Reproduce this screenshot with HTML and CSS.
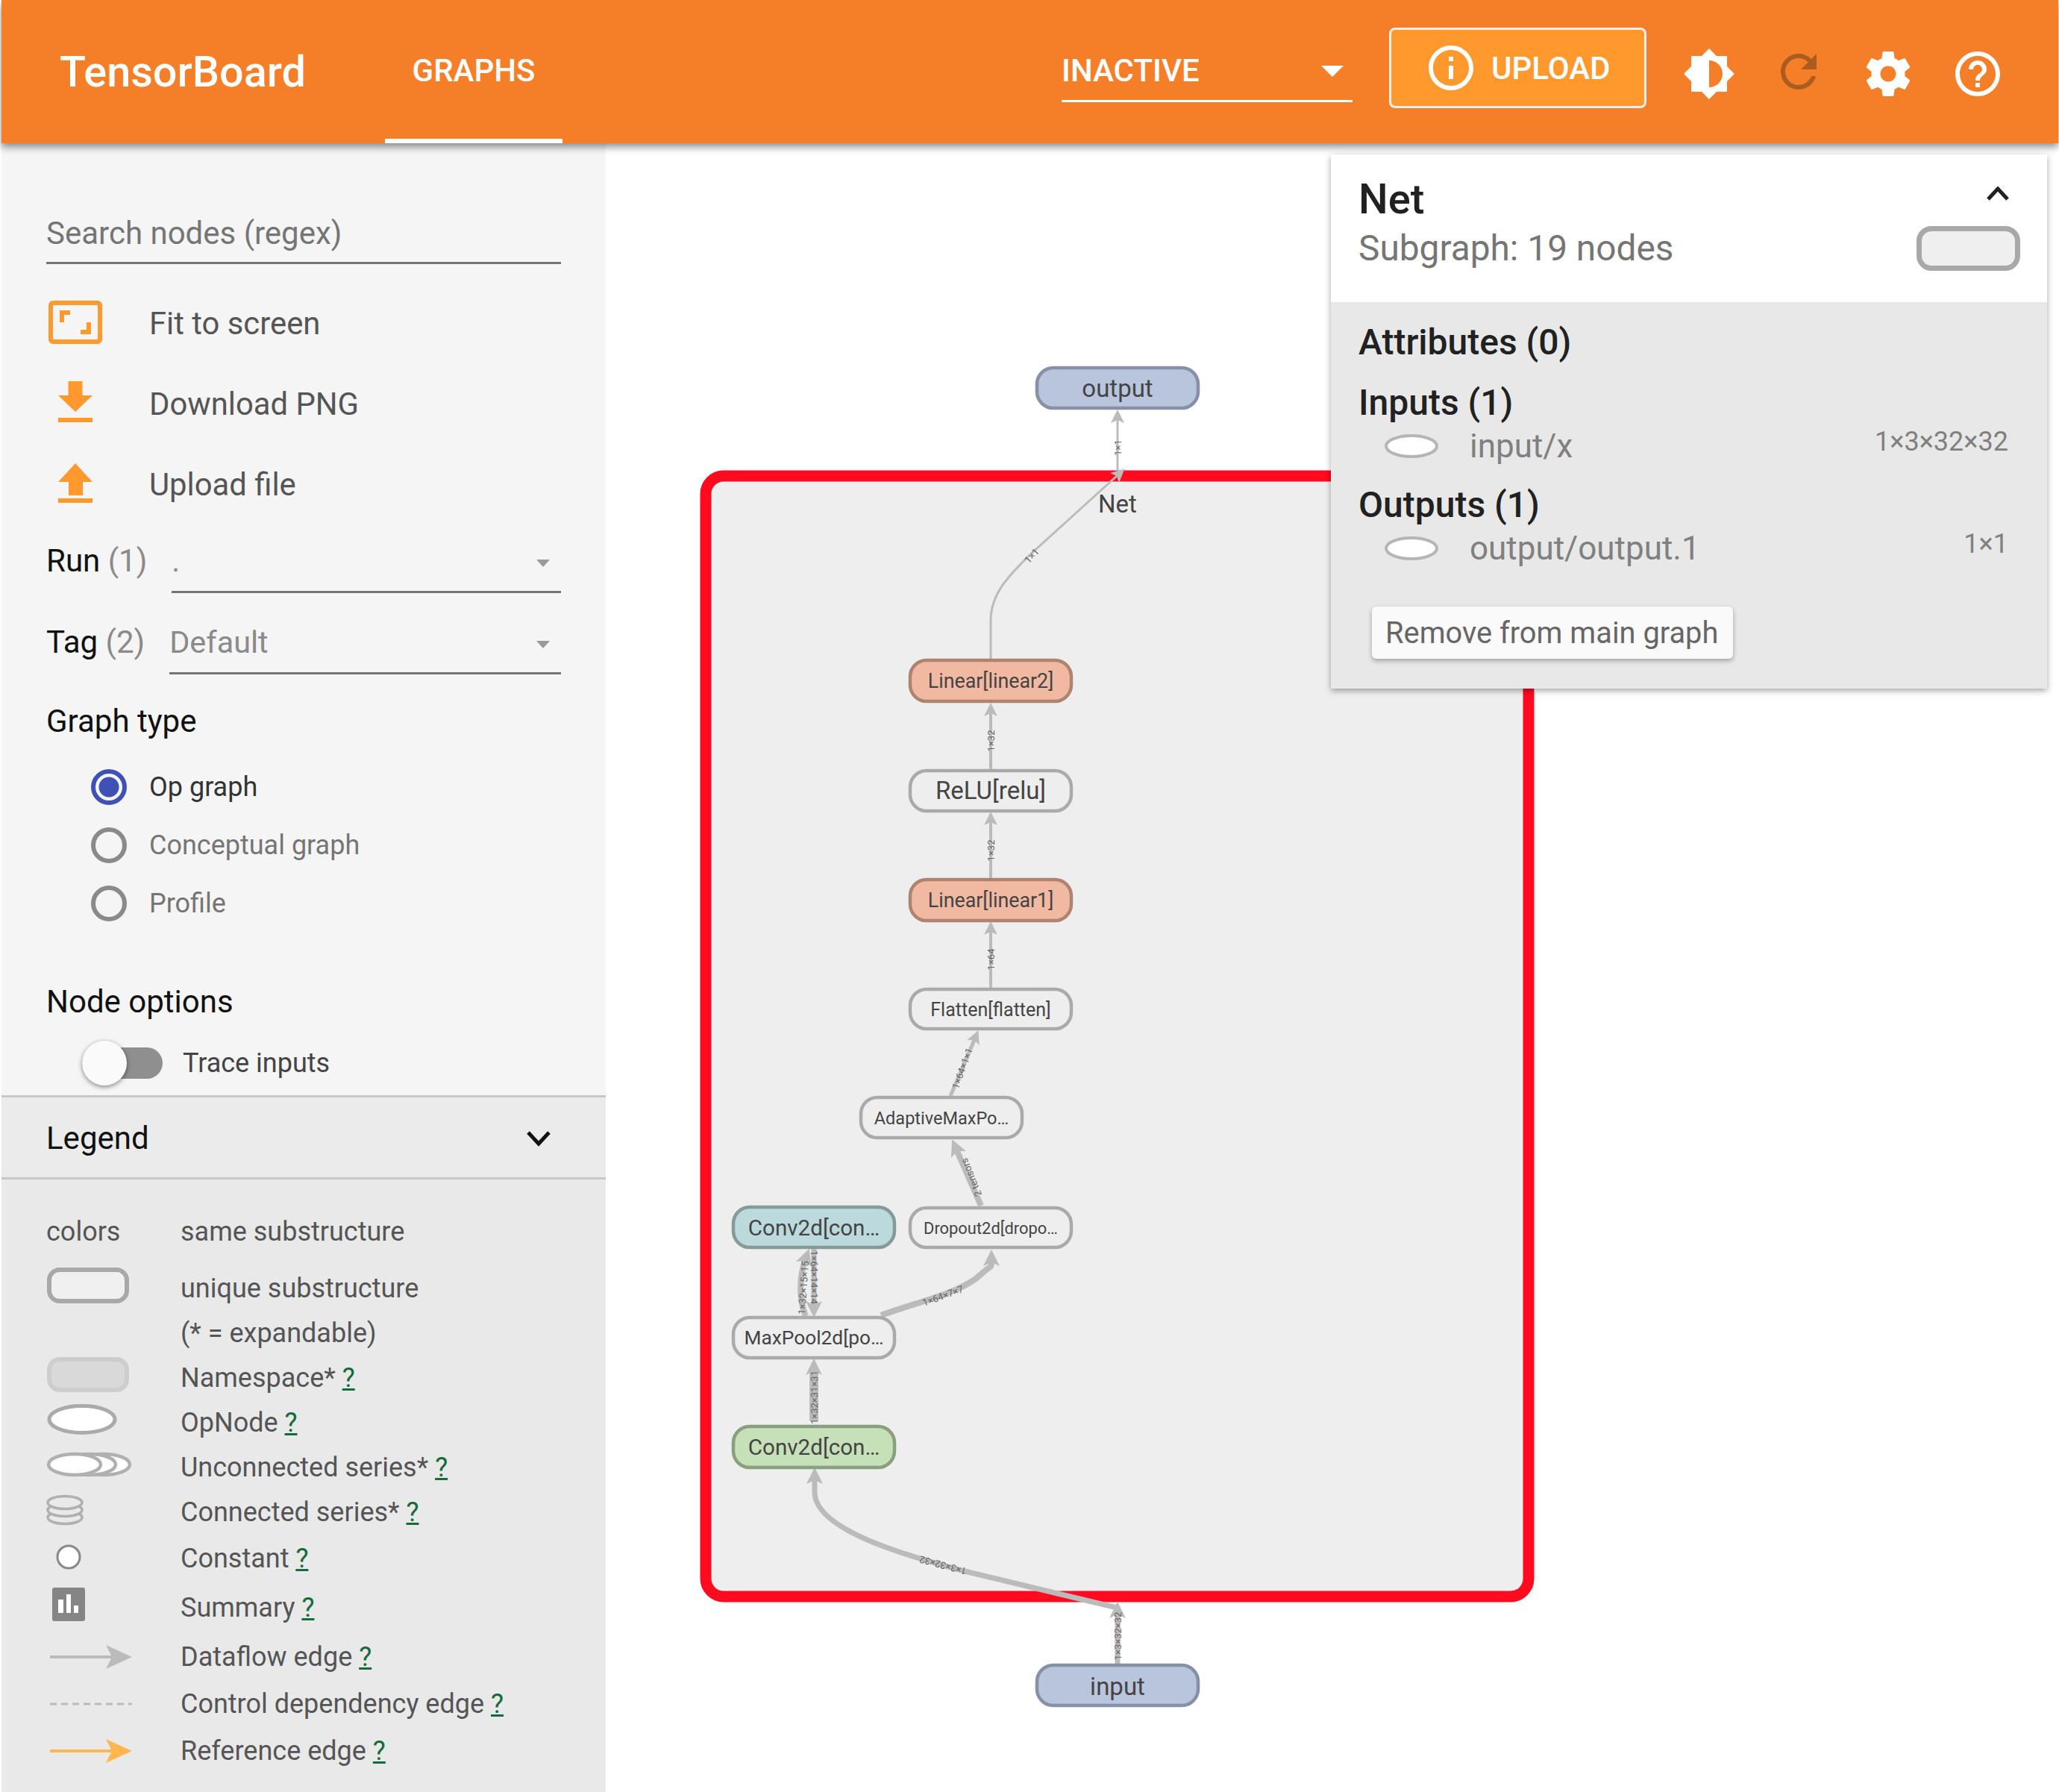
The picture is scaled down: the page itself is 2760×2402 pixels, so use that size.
FILE: index.html
```html
<!DOCTYPE html>
<html lang="en">
  <head>
    <meta charset="UTF-8" />
    <title>TensorBoard</title>
    <link rel="stylesheet" href="styles.css">
  </head>
  <body>
    <div class="header">
      <div class="brand">TensorBoard</div>
      <div class="tab">GRAPHS</div>
      <div class="run-select">
        <span>INACTIVE</span>
        <span class="run-caret"></span>
      </div>
      <button class="upload-btn">
        <svg class="upload-icon" viewBox="0 0 24 24"><path d="M11 17h2v-6h-2v6zm1-15C6.48 2 2 6.48 2 12s4.48 10 10 10 10-4.48 10-10S17.52 2 12 2zm0 18c-4.41 0-8-3.59-8-8s3.59-8 8-8 8 3.59 8 8-3.59 8-8 8zM11 9h2V7h-2v2z"/></svg>
        <span>UPLOAD</span>
      </button>
      <svg class="icon" viewBox="0 0 24 24"><path d="M20 15.31L23.31 12 20 8.69V4h-4.69L12 .69 8.69 4H4v4.69L.69 12 4 15.31V20h4.69L12 23.31 15.31 20H20v-4.69zM12 18V6c3.31 0 6 2.69 6 6s-2.69 6-6 6z"/></svg>
      <svg class="icon icon-disabled" viewBox="0 0 24 24"><path d="M17.65 6.35C16.2 4.9 14.21 4 12 4c-4.42 0-7.99 3.58-7.99 8s3.57 8 7.99 8c3.73 0 6.84-2.55 7.73-6h-2.08c-.82 2.33-3.04 4-5.65 4-3.31 0-6-2.69-6-6s2.69-6 6-6c1.66 0 3.14.69 4.22 1.78L13 11h7V4l-2.35 2.35z"/></svg>
      <svg class="icon" viewBox="0 0 24 24"><path d="M19.43 12.98c.04-.32.07-.64.07-.98s-.03-.66-.07-.98l2.11-1.65c.19-.15.24-.42.12-.64l-2-3.46c-.12-.22-.39-.3-.61-.22l-2.49 1c-.52-.4-1.08-.73-1.69-.98l-.38-2.65C14.46 2.18 14.25 2 14 2h-4c-.25 0-.46.18-.49.42l-.38 2.65c-.61.25-1.17.59-1.69.98l-2.49-1c-.23-.09-.49 0-.61.22l-2 3.46c-.13.22-.07.49.12.64l2.11 1.65c-.04.32-.07.65-.07.98s.03.66.07.98l-2.11 1.65c-.19.15-.24.42-.12.64l2 3.46c.12.22.39.3.61.22l2.49-1c.52.4 1.08.73 1.69.98l.38 2.65c.03.24.24.42.49.42h4c.25 0 .46-.18.49-.42l.38-2.65c.61-.25 1.17-.59 1.69-.98l2.49 1c.23.09.49 0 .61-.22l2-3.46c.12-.22.07-.49-.12-.64l-2.11-1.65zM12 15.5c-1.93 0-3.5-1.57-3.5-3.5s1.57-3.5 3.5-3.5 3.5 1.57 3.5 3.5-1.57 3.5-3.5 3.5z"/></svg>
      <svg class="icon" viewBox="0 0 24 24"><path d="M11 18h2v-2h-2v2zm1-16C6.48 2 2 6.48 2 12s4.48 10 10 10 10-4.48 10-10S17.52 2 12 2zm0 18c-4.41 0-8-3.59-8-8s3.59-8 8-8 8 3.59 8 8-3.59 8-8 8zm0-14c-2.21 0-4 1.79-4 4h2c0-1.1.9-2 2-2s2 .9 2 2c0 2-3 1.75-3 5h2c0-2.25 3-2.5 3-5 0-2.21-1.79-4-4-4z"/></svg>
    </div>

    <div class="main">
      <div class="sidebar">
        <div class="controls">
          <div class="search">Search nodes (regex)</div>

          <div class="actions">
            <div class="action">
              <svg class="action-icon" viewBox="0 0 80 80"><rect x="6" y="13" width="66" height="52" rx="3" class="fit-frame"/><path d="M18 39V23H32V29H24V39Z M60 39V55H46V49H54V39Z" class="fit-corners"/></svg>
              <span>Fit to screen</span>
            </div>
            <div class="action">
              <svg class="action-icon" viewBox="0 0 80 80"><path d="M29.5 10H48.5V29H62L39 51L16 29H29.5ZM16 59H62V65H16Z"/></svg>
              <span>Download PNG</span>
            </div>
            <div class="action">
              <svg class="action-icon" viewBox="0 0 80 80"><path d="M39 12L62 37H49V55H30V37H16ZM16 59H62V65H16Z"/></svg>
              <span>Upload file</span>
            </div>
          </div>

          <div class="filter filter-run">
            <div class="filter-label">Run <span class="count">(1)</span></div>
            <div class="filter-select"><span>.</span><span class="caret"></span></div>
          </div>
          <div class="filter filter-tag">
            <div class="filter-label">Tag <span class="count">(2)</span></div>
            <div class="filter-select"><span>Default</span><span class="caret"></span></div>
          </div>

          <div class="section-title graph-type">Graph type</div>
          <div class="radios">
            <div class="radio radio-checked"><span class="radio-mark"></span>Op graph</div>
            <div class="radio"><span class="radio-mark"></span>Conceptual graph</div>
            <div class="radio"><span class="radio-mark"></span>Profile</div>
          </div>

          <div class="section-title node-options">Node options</div>
          <div class="trace">
            <div class="toggle"><span class="toggle-thumb"></span></div>
            <span>Trace inputs</span>
          </div>
        </div>

        <div class="legend-header">
          <span>Legend</span>
          <svg class="legend-chevron" viewBox="0 0 40 24"><path d="M6 4L20 19L34 4"/></svg>
        </div>

        <div class="legend">
          <div class="legend-row">
            <div class="legend-key">colors</div>
            <div>same substructure</div>
          </div>
          <div class="legend-row row-unique">
            <svg class="legend-icon" viewBox="0 0 120 60"><rect x="4" y="5" width="104" height="42" rx="14" class="shape-unique"/></svg>
            <div>unique substructure</div>
          </div>
          <div class="legend-row">
            <div class="legend-key"></div>
            <div>(* = expandable)</div>
          </div>
          <div class="legend-row">
            <svg class="legend-icon" viewBox="0 0 120 60"><rect x="4" y="5" width="104" height="41" rx="14" class="shape-namespace"/></svg>
            <div>Namespace* <a href="#">?</a></div>
          </div>
          <div class="legend-row">
            <svg class="legend-icon" viewBox="0 0 120 60"><ellipse cx="48" cy="25.5" rx="44" ry="18" class="shape-op"/></svg>
            <div>OpNode <a href="#">?</a></div>
          </div>
          <div class="legend-row">
            <svg class="legend-icon" viewBox="0 0 120 60">
              <ellipse cx="77" cy="26" rx="35" ry="14" class="shape-series"/>
              <ellipse cx="58" cy="26" rx="35" ry="14" class="shape-series"/>
              <ellipse cx="38" cy="26" rx="35" ry="14" class="shape-series"/>
            </svg>
            <div>Unconnected series* <a href="#">?</a></div>
          </div>
          <div class="legend-row">
            <svg class="legend-icon" viewBox="0 0 120 60">
              <ellipse cx="25" cy="37" rx="23" ry="8.5" class="shape-stack"/>
              <ellipse cx="25" cy="27" rx="23" ry="8.5" class="shape-stack"/>
              <ellipse cx="25" cy="17" rx="23" ry="8.5" class="shape-stack"/>
            </svg>
            <div>Connected series* <a href="#">?</a></div>
          </div>
          <div class="legend-row row-constant">
            <svg class="legend-icon" viewBox="0 0 120 60"><circle cx="30" cy="28" r="15" class="shape-const"/></svg>
            <div>Constant <a href="#">?</a></div>
          </div>
          <div class="legend-row row-summary">
            <svg class="legend-icon" viewBox="0 0 120 60">
              <rect x="8" y="3" width="44" height="45" rx="3" class="shape-summary"/>
              <path d="M16 19H23V37H16ZM27 12H33V37H27ZM37 27H43V37H37Z" class="shape-bars"/>
            </svg>
            <div>Summary <a href="#">?</a></div>
          </div>
          <div class="legend-row row-summary">
            <svg class="legend-icon" viewBox="0 0 120 60">
              <path d="M5 30H88" class="edge-flow"/>
              <path d="M80 14L115 30L80 46L88 30Z" class="head-flow"/>
            </svg>
            <div>Dataflow edge <a href="#">?</a></div>
          </div>
          <div class="legend-row row-control">
            <svg class="legend-icon" viewBox="0 0 120 60"><path d="M5 30H115" class="edge-control"/></svg>
            <div>Control dependency edge <a href="#">?</a></div>
          </div>
          <div class="legend-row row-reference">
            <svg class="legend-icon" viewBox="0 0 120 60">
              <path d="M5 30H88" class="edge-ref"/>
              <path d="M80 14L115 30L80 46L88 30Z" class="head-ref"/>
            </svg>
            <div>Reference edge <a href="#">?</a></div>
          </div>
        </div>
      </div>

      <div class="graph">
        <svg class="graph-canvas" viewBox="812 192 1946 2210">
          <defs>
            <marker id="arrow" viewBox="0 0 18 18" refX="4" refY="9" markerWidth="18" markerHeight="18" markerUnits="userSpaceOnUse" orient="auto"><path d="M0 0L18 9L0 18L4 9Z" fill="#bbb"/></marker>
            <marker id="arrow-lg" viewBox="0 0 18 18" refX="4" refY="9" markerWidth="22" markerHeight="22" markerUnits="userSpaceOnUse" orient="auto"><path d="M0 0L18 9L0 18L4 9Z" fill="#bbb"/></marker>
          </defs>

          <rect x="946" y="638" width="1103" height="1502" rx="24" class="net-box"/>
          <text x="1498" y="687" class="net-label">Net</text>

          <path d="M1498 631V563" class="edge edge-1" marker-end="url(#arrow)"/>
          <path d="M1328 883V832C1328 796 1352 772 1379 745L1497 638" class="edge edge-1" marker-end="url(#arrow)"/>
          <path d="M1328 1031V956" class="edge edge-2" marker-end="url(#arrow)"/>
          <path d="M1328 1178V1102" class="edge edge-2" marker-end="url(#arrow)"/>
          <path d="M1328 1324V1249" class="edge edge-2" marker-end="url(#arrow)"/>
          <path d="M1274 1469L1306 1394" class="edge edge-3" marker-end="url(#arrow)"/>
          <path d="M1315 1616L1283 1543" class="edge edge-5" marker-end="url(#arrow-lg)"/>
          <path d="M1181 1763C1240 1742 1290 1732 1315 1708C1328 1696 1329 1700 1329 1692" class="edge edge-5" marker-end="url(#arrow-lg)"/>
          <path d="M1080 1764C1070 1740 1072 1710 1079 1690" class="edge edge-5" marker-end="url(#arrow-lg)"/>
          <path d="M1091 1674V1749" class="edge edge-6" marker-end="url(#arrow-lg)"/>
          <path d="M1091 1905V1838" class="edge edge-8" marker-end="url(#arrow-lg)"/>
          <path d="M1497 2155L1293 2106C1210 2084 1092 2050 1092 2000V1984" class="edge edge-6" marker-end="url(#arrow-lg)"/>
          <path d="M1498 2230V2164" class="edge edge-6" marker-end="url(#arrow-lg)"/>

          <text class="edge-label" transform="translate(1498 600) rotate(-90)">1×1</text>
          <text class="edge-label" transform="translate(1383 745) rotate(-47)">1×1</text>
          <text class="edge-label" transform="translate(1328 993) rotate(-90)">1×32</text>
          <text class="edge-label" transform="translate(1328 1140) rotate(-90)">1×32</text>
          <text class="edge-label" transform="translate(1328 1286) rotate(-90)">1×64</text>
          <text class="edge-label" transform="translate(1290 1432) rotate(-70)">1×64×1×1</text>
          <text class="edge-label" transform="translate(1302 1578) rotate(-112)">2 tensors</text>
          <text class="edge-label" transform="translate(1264 1737) rotate(-20)">1×64×7×7</text>
          <text class="edge-label" transform="translate(1077 1726) rotate(-86)">1×32×15×15</text>
          <text class="edge-label" transform="translate(1091 1712) rotate(90)">1×64×14×14</text>
          <text class="edge-label" transform="translate(1091 1873) rotate(-90)">1×32×31×31</text>
          <text class="edge-label" transform="translate(1264 2098) rotate(-165)">1×3×32×32</text>
          <text class="edge-label" transform="translate(1498 2193) rotate(-90)">1×3×32×32</text>

          <rect x="1390" y="493" width="216" height="54" rx="22" class="node node-io"/>
          <text x="1498" y="520" class="node-label fs-33">output</text>

          <rect x="1220" y="885" width="216" height="55" rx="22" class="node node-linear"/>
          <text x="1328" y="913" class="node-label fs-27">Linear[linear2]</text>

          <rect x="1220" y="1033" width="216" height="54" rx="22" class="node node-plain"/>
          <text x="1328" y="1059" class="node-label fs-33">ReLU[relu]</text>

          <rect x="1220" y="1179" width="216" height="55" rx="22" class="node node-linear"/>
          <text x="1328" y="1207" class="node-label fs-27">Linear[linear1]</text>

          <rect x="1220" y="1326" width="216" height="53" rx="22" class="node node-plain"/>
          <text x="1328" y="1353" class="node-label fs-25">Flatten[flatten]</text>

          <rect x="1154" y="1471" width="216" height="54" rx="22" class="node node-plain"/>
          <text x="1262" y="1499" class="node-label fs-23">AdaptiveMaxPo…</text>

          <rect x="983" y="1618" width="216" height="54" rx="22" class="node node-teal"/>
          <text x="1091" y="1646" class="node-label fs-30">Conv2d[con…</text>

          <rect x="1220" y="1619" width="216" height="53" rx="22" class="node node-plain"/>
          <text x="1328" y="1646" class="node-label fs-22">Dropout2d[dropo…</text>

          <rect x="983" y="1766" width="216" height="54" rx="22" class="node node-plain"/>
          <text x="1091" y="1793" class="node-label fs-26">MaxPool2d[po…</text>

          <rect x="983" y="1912" width="216" height="55" rx="22" class="node node-green"/>
          <text x="1091" y="1940" class="node-label fs-30">Conv2d[con…</text>

          <rect x="1390" y="2232" width="216" height="54" rx="22" class="node node-io"/>
          <text x="1498" y="2260" class="node-label fs-33">input</text>
        </svg>

        <div class="info-card">
          <div class="info-top">
            <div class="info-title-row">
              <div class="info-title">Net</div>
              <svg class="info-chevron" viewBox="0 0 30 20"><path d="M2 17L15 3L28 17"/></svg>
            </div>
            <div class="info-sub-row">
              <div class="info-sub">Subgraph: 19 nodes</div>
              <div class="info-node-icon"></div>
            </div>
          </div>
          <div class="info-body">
            <div class="info-heading">Attributes (0)</div>
            <div class="info-heading info-heading-next">Inputs (1)</div>
            <div class="info-row">
              <svg class="info-ellipse" viewBox="0 0 72 32"><ellipse cx="36" cy="16" rx="34" ry="14"/></svg>
              <span>input/x</span>
              <span class="info-dim">1×3×32×32</span>
            </div>
            <div class="info-heading info-heading-next">Outputs (1)</div>
            <div class="info-row">
              <svg class="info-ellipse" viewBox="0 0 72 32"><ellipse cx="36" cy="16" rx="34" ry="14"/></svg>
              <span>output/output.1</span>
              <span class="info-dim">1×1</span>
            </div>
            <button class="remove-btn">Remove from main graph</button>
          </div>
        </div>
      </div>
    </div>
  </body>
</html>
```

FILE: styles.css
```css
html,
body {
  height: 100%;
}
body {
  font-family: Roboto, sans-serif;
  margin: 0;
  padding: 0 1px 0 2px;
  box-sizing: border-box;
  display: flex;
  flex-direction: column;
  background: white;
  overflow: hidden;
}

/* top bar */
.header {
  position: relative;
  z-index: 2;
  flex: none;
  height: 192px;
  padding-right: 24px;
  display: flex;
  align-items: center;
  background: #f57f29;
  color: white;
  box-shadow: 0 5px 10px rgba(0, 0, 0, 0.45);
}
.brand {
  flex: none;
  width: 330px;
  margin: 0 106px 0 78px;
  font-size: 57.5px;
  font-weight: 500;
}
.tab {
  flex: none;
  box-sizing: border-box;
  width: 238px;
  height: 192px;
  line-height: 190px;
  border-bottom: 6px solid white;
  text-align: center;
  font-size: 42px;
  font-weight: 500;
}
.run-select {
  flex: none;
  box-sizing: border-box;
  width: 390px;
  margin-left: auto;
  margin-right: 49px;
  padding: 14px 12px 13px 0;
  display: flex;
  justify-content: space-between;
  align-items: center;
  line-height: 52px;
  font-size: 42px;
  font-weight: 500;
  border-bottom: 3px solid white;
}
.run-caret {
  width: 0;
  height: 0;
  border-left: 15px solid transparent;
  border-right: 15px solid transparent;
  border-top: 15px solid white;
}
.upload-btn {
  flex: none;
  box-sizing: border-box;
  width: 345px;
  height: 108px;
  margin: -10px 48px 0 0;
  padding: 0 0 0 44px;
  display: flex;
  align-items: center;
  gap: 18px;
  background: #ff992d;
  border: 3px solid #eee;
  border-radius: 8px;
  color: white;
  font-family: Roboto, sans-serif;
  font-size: 42px;
  font-weight: 500;
}
.upload-icon {
  width: 72px;
  height: 72px;
  fill: white;
}
.icon {
  flex: none;
  width: 72px;
  height: 72px;
  margin: 6px 48px 0 0;
  fill: white;
}
.icon-disabled {
  margin-top: 0;
  fill: #ad5c1f;
}

.main {
  flex: 1;
  display: flex;
  min-height: 0;
}

/* sidebar */
.sidebar {
  flex: none;
  width: 810px;
  display: flex;
  flex-direction: column;
  background: #f5f5f5;
}
.controls {
  padding: 0 60px;
}
.search {
  margin-top: 95px;
  padding-bottom: 12px;
  line-height: 52px;
  font-size: 42px;
  color: #757575;
  border-bottom: 3px solid #757575;
}
.actions {
  margin-top: 25px;
}
.action {
  height: 108px;
  display: flex;
  align-items: center;
  font-size: 41.8px;
  color: #555;
}
.action-icon {
  flex: none;
  width: 80px;
  height: 80px;
  margin-right: 58px;
  fill: #ff992d;
}
.fit-frame {
  fill: none;
  stroke: #ff992d;
  stroke-width: 6;
}
.fit-corners {
  fill: #ff992d;
}
.filter {
  display: flex;
  gap: 33px;
}
.filter-run {
  margin-top: 23px;
}
.filter-tag {
  margin-top: 40px;
}
.filter-label {
  flex: none;
  line-height: 51px;
  font-size: 42px;
  color: #111;
}
.count {
  color: #8a8a8a;
}
.filter-select {
  flex: 1;
  box-sizing: border-box;
  height: 69px;
  padding: 0 15px 0 0;
  display: flex;
  justify-content: space-between;
  line-height: 52px;
  font-size: 41.4px;
  color: #8a8a8a;
  border-bottom: 3px solid #757575;
}
.caret {
  margin-top: 24px;
  width: 0;
  height: 0;
  border-left: 9px solid transparent;
  border-right: 9px solid transparent;
  border-top: 10px solid #9a9a9a;
}
.section-title {
  line-height: 50px;
  font-size: 42px;
  color: #111;
}
.graph-type {
  margin-top: 38px;
}
.radios {
  margin-top: 24px;
}
.radio {
  height: 78px;
  padding-left: 60px;
  display: flex;
  align-items: center;
  gap: 30px;
  font-size: 36px;
  color: #757575;
}
.radio-mark {
  flex: none;
  box-sizing: border-box;
  width: 48px;
  height: 48px;
  border: 6px solid #8a8a8a;
  border-radius: 50%;
}
.radio-checked {
  color: #333;
}
.radio-checked .radio-mark {
  border-color: #3f51b5;
  background: radial-gradient(circle, #3f51b5 0 13px, transparent 14px);
}
.node-options {
  margin-top: 68px;
}
.trace {
  margin-top: 27px;
  height: 60px;
  display: flex;
  align-items: center;
  font-size: 36px;
  color: #444;
}
.toggle {
  position: relative;
  flex: none;
  width: 108px;
  height: 42px;
  margin: 0 27px 0 48px;
  background: #8f8f8f;
  border-radius: 21px;
}
.toggle-thumb {
  position: absolute;
  left: 0;
  top: -9px;
  width: 60px;
  height: 60px;
  border-radius: 50%;
  background: #fafafa;
  box-shadow: 0 2px 6px rgba(0, 0, 0, 0.45);
}
.legend-header {
  flex: none;
  box-sizing: border-box;
  height: 113px;
  margin-top: 13px;
  padding: 2px 70px 0 60px;
  display: flex;
  justify-content: space-between;
  align-items: center;
  font-size: 42px;
  color: #111;
  background: #ebebeb;
  border-top: 3px solid #c8c8c8;
  border-bottom: 3px solid #c8c8c8;
}
.legend-chevron {
  width: 40px;
  height: 24px;
  fill: none;
  stroke: #111;
  stroke-width: 5;
}

/* legend */
.legend {
  flex: 1;
  padding: 40px 0 0 60px;
  background: #e9e9e9;
  font-size: 36px;
  color: #555;
}
.legend-row {
  height: 60px;
  display: flex;
  align-items: center;
}
.legend-row a {
  color: #146c3a;
}
.legend-key {
  flex: none;
  width: 180px;
}
.legend-icon {
  flex: none;
  width: 120px;
  height: 60px;
  margin-right: 60px;
}
.row-unique {
  margin-top: 16px;
}
.row-constant {
  margin-top: 2px;
}
.row-summary {
  margin-top: 6px;
}
.row-control {
  margin-top: 3px;
}
.row-reference {
  margin-top: 3px;
}
.shape-unique {
  fill: #f0f0f0;
  stroke: #a8a8a8;
  stroke-width: 6;
}
.shape-namespace {
  fill: #d9d9d9;
  stroke: #cdcdcd;
  stroke-width: 6;
}
.shape-op {
  fill: white;
  stroke: #aaa;
  stroke-width: 5;
}
.shape-series {
  fill: white;
  stroke: #b0b0b0;
  stroke-width: 4.5;
}
.shape-stack {
  fill: #e9e9e9;
  stroke: #b0b0b0;
  stroke-width: 3.5;
}
.shape-const {
  fill: white;
  stroke: #888;
  stroke-width: 3;
}
.shape-summary {
  fill: #858585;
}
.shape-bars {
  fill: white;
}
.edge-flow {
  stroke: #bbb;
  stroke-width: 4;
}
.head-flow {
  fill: #bbb;
}
.edge-control {
  stroke: #bbb;
  stroke-width: 3;
  stroke-dasharray: 9 6;
}
.edge-ref {
  stroke: #ffb74d;
  stroke-width: 4;
}
.head-ref {
  fill: #ffb74d;
}

/* graph */
.graph {
  position: relative;
  flex: 1;
  min-width: 0;
}
.graph-canvas {
  position: absolute;
  left: 0;
  top: 0;
  width: 1946px;
  height: 2210px;
}
.net-box {
  fill: #eee;
  stroke: #ff0a1e;
  stroke-width: 15;
}
.net-label {
  font-size: 33px;
  fill: #444;
  text-anchor: middle;
}
.edge {
  fill: none;
  stroke: #bbb;
}
.edge-1 {
  stroke-width: 3;
}
.edge-2 {
  stroke-width: 4;
}
.edge-3 {
  stroke-width: 5;
}
.edge-5 {
  stroke-width: 8;
}
.edge-6 {
  stroke-width: 7;
}
.edge-8 {
  stroke-width: 12;
}
.edge-label {
  font-size: 13px;
  fill: #666;
  text-anchor: middle;
  dominant-baseline: central;
}
.node {
  stroke-width: 4.5;
}
.node-io {
  fill: #b9c5dd;
  stroke: #8690a6;
}
.node-linear {
  fill: #f2b9a2;
  stroke: #b08371;
}
.node-plain {
  fill: #eee;
  stroke: #aaa;
}
.node-teal {
  fill: #bcdadb;
  stroke: #869a9b;
}
.node-green {
  fill: #c6e0b8;
  stroke: #88a07e;
}
.node-label {
  fill: #444;
  text-anchor: middle;
  dominant-baseline: central;
}
.fs-33 {
  font-size: 33px;
}
.fs-30 {
  font-size: 29.6px;
}
.fs-27 {
  font-size: 26.8px;
}
.fs-26 {
  font-size: 26.3px;
}
.fs-25 {
  font-size: 25px;
}
.fs-23 {
  font-size: 23.5px;
}
.fs-22 {
  font-size: 21.9px;
}

/* info card over the graph */
.info-card {
  position: absolute;
  left: 972px;
  top: 15px;
  width: 960px;
  box-shadow: 0 3px 8px rgba(0, 0, 0, 0.35);
}
.info-top {
  box-sizing: border-box;
  height: 198px;
  padding: 28px 36px 0 37px;
  background: white;
}
.info-title-row,
.info-sub-row {
  display: flex;
  justify-content: space-between;
}
.info-title {
  line-height: 64px;
  font-size: 56px;
  font-weight: 500;
  color: #212121;
}
.info-chevron {
  margin: 15px 15px 0 0;
  width: 30px;
  height: 20px;
  fill: none;
  stroke: #212121;
  stroke-width: 5;
}
.info-sub-row {
  margin-top: 4px;
  align-items: center;
}
.info-sub {
  line-height: 54px;
  font-size: 47.8px;
  color: #757575;
}
.info-node-icon {
  box-sizing: border-box;
  width: 139px;
  height: 60px;
  background: #efefef;
  border: 7px solid #a8a8a8;
  border-radius: 20px;
}
.info-body {
  box-sizing: border-box;
  height: 518px;
  padding: 26px 37px 0;
  background: #e8e8e8;
}
.info-heading {
  line-height: 56px;
  font-size: 48px;
  font-weight: 500;
  color: #212121;
}
.info-heading-next {
  margin-top: 25px;
}
.info-row {
  margin-top: 4px;
  display: flex;
  align-items: center;
  line-height: 52px;
  font-size: 44px;
  color: #808080;
}
.info-ellipse {
  flex: none;
  width: 72px;
  height: 32px;
  margin: 0 42px 0 35px;
  fill: white;
  stroke: #b5b5b5;
  stroke-width: 4;
}
.info-dim {
  align-self: flex-start;
  margin: 0 15px 0 auto;
  line-height: 40px;
  font-size: 36px;
}
.remove-btn {
  display: block;
  margin: 52px 0 0 18px;
  height: 70px;
  padding: 0 20px 0 18px;
  font-family: Roboto, sans-serif;
  font-size: 39.8px;
  color: #666;
  background: #fafafa;
  border: none;
  border-radius: 6px;
  box-shadow: 0 3px 6px rgba(0, 0, 0, 0.3);
}
```
